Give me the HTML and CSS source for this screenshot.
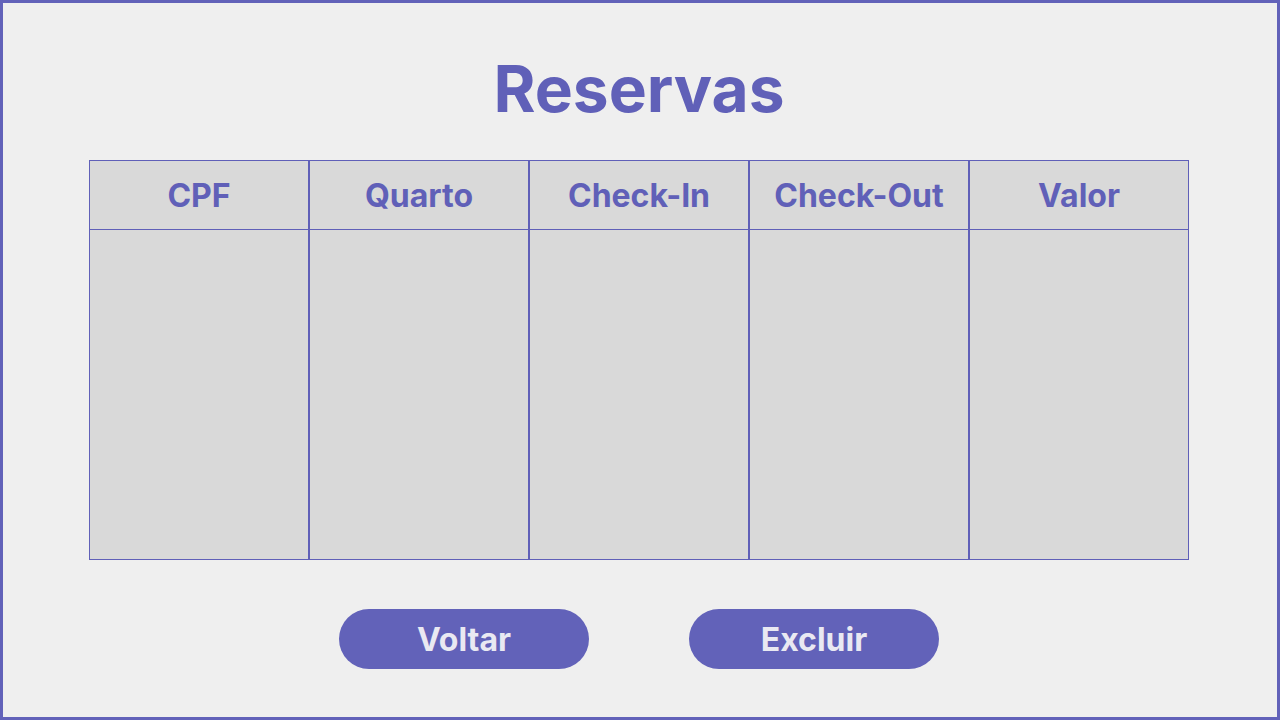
FILE: index.html
```html
<!DOCTYPE html>
<html lang="pt">
<head>
<meta charset="utf-8">
<title>Reservas</title>
<link rel="stylesheet" href="styles.css">
</head>
<body>
<div class="frame">
  <h1 class="title">Reservas</h1>
  <div class="table">
    <div class="col"><div class="head">CPF</div><div class="cell"></div></div>
    <div class="col"><div class="head">Quarto</div><div class="cell"></div></div>
    <div class="col"><div class="head">Check-In</div><div class="cell"></div></div>
    <div class="col"><div class="head">Check-Out</div><div class="cell"></div></div>
    <div class="col"><div class="head">Valor</div><div class="cell"></div></div>
  </div>
  <div class="actions">
    <button class="btn">Voltar</button>
    <button class="btn">Excluir</button>
  </div>
</div>
</body>
</html>
```
FILE: styles.css
```css
* { box-sizing: border-box; }
html, body { margin: 0; padding: 0; }
body {
  background: #efefef;
  font-family: Inter, "Liberation Sans", sans-serif;
}
.frame {
  width: 1280px;
  height: 720px;
  border: 3px solid #6262b9;
  background: #efefef;
  display: flex;
  flex-direction: column;
  align-items: center;
  padding-top: 54px;
  padding-right: 2px;
}
.title {
  margin: 0;
  font-size: 64px;
  line-height: 64px;
  font-weight: 700;
  color: #6060b8;
}
.table {
  margin-top: 39px;
  display: grid;
  grid-template-columns: repeat(5, 220px);
  width: 1100px;
  height: 400px;
}
.col {
  border: 1px solid #6060b8;
  background: #d9d9d9;
  display: flex;
  flex-direction: column;
}
.head {
  height: 69px;
  border-bottom: 1px solid #6060b8;
  display: flex;
  align-items: center;
  justify-content: center;
  font-size: 32px;
  font-weight: 700;
  color: #6060b8;
}
.cell { flex: 1; }
.actions {
  margin-top: 49px;
  display: flex;
  gap: 100px;
}
.btn {
  width: 250px;
  height: 60px;
  border: none;
  border-radius: 30px;
  background: #6262b9;
  color: #e9e9f2;
  font-family: Inter, "Liberation Sans", sans-serif;
  font-size: 32px;
  font-weight: 700;
  padding: 0;
  cursor: pointer;
}
```
